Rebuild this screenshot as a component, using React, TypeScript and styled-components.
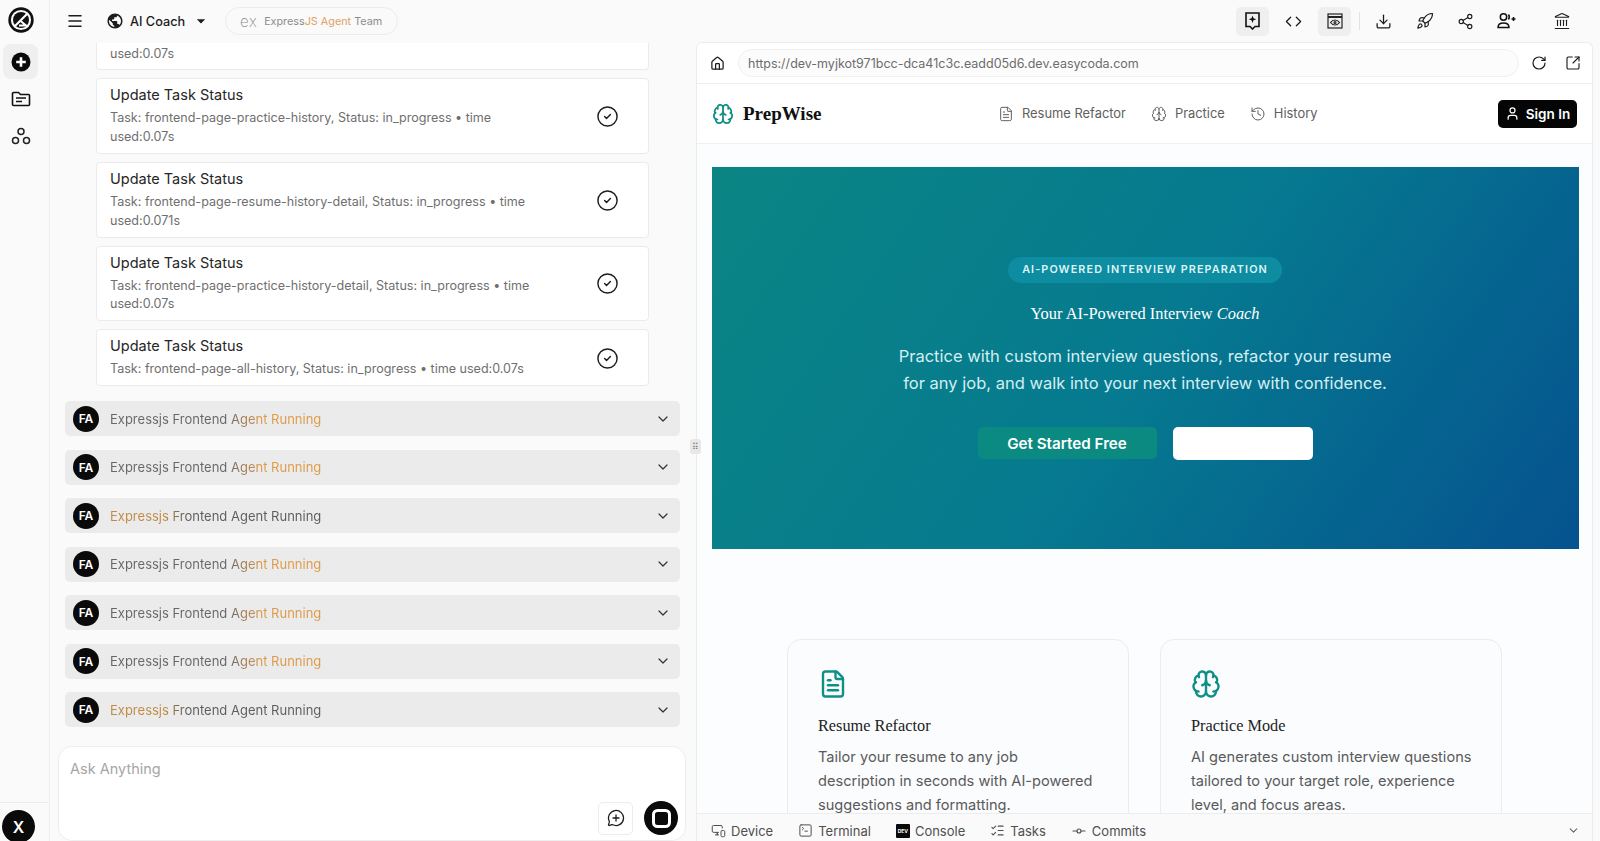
import styled, { createGlobalStyle } from "styled-components";
import {
  Brain,
  ChevronDown,
  CircleCheck,
  Code,
  Download,
  FileText,
  GitCommitHorizontal,
  History,
  House,
  Landmark,
  ListChecks,
  Menu,
  MessageCirclePlus,
  MonitorSmartphone,
  Rocket,
  RotateCw,
  Share2,
  SquareArrowOutUpRight,
  SquareTerminal,
  User,
} from "lucide-react";
import { MdPublic, MdArrowDropDown } from "react-icons/md";

const GlobalStyle = createGlobalStyle`
  * { box-sizing: border-box; }
  html, body, #root { height: 100%; }
  body {
    margin: 0;
    overflow: hidden;
    background: #fafafa;
    color: #1c1c1c;
    font-family: Inter, "Liberation Sans", sans-serif;
  }
`;

const Shell = styled.div`
  display: flex;
  height: 100vh;
`;

const Rail = styled.aside`
  width: 50px;
  flex: none;
  display: flex;
  flex-direction: column;
  align-items: flex-start;
  padding-left: 3px;
  border-right: 1px solid #efefef;
`;

const RailLogo = styled.div`
  height: 42px;
  width: 35px;
  padding-bottom: 3px;
  display: flex;
  align-items: center;
  justify-content: center;
`;

const RailButton = styled.div<{ $active?: boolean }>`
  width: 35px;
  height: 35px;
  margin-top: 2px;
  display: flex;
  align-items: center;
  justify-content: center;
  border-radius: 8px;
  background: ${(p) => (p.$active ? "#efefef" : "transparent")};
`;

const RailFoot = styled.div`
  margin-top: auto;
  margin-left: -3px;
  width: 49px;
  height: 39px;
  padding: 7px 0 0 2px;
  border-top: 1px solid #ececec;
`;

const Avatar = styled.div<{ $size: number }>`
  width: ${(p) => p.$size}px;
  height: ${(p) => p.$size}px;
  flex: none;
  display: flex;
  align-items: center;
  justify-content: center;
  border-radius: 50%;
  background: #0a0a0a;
  color: #fff;
  font-size: ${(p) => (p.$size > 30 ? 16 : 12)}px;
  font-weight: 600;
`;

const Main = styled.div`
  flex: 1;
  min-width: 0;
  display: flex;
  flex-direction: column;
`;

const TopBar = styled.header`
  height: 42px;
  flex: none;
  display: flex;
  align-items: center;
  padding-left: 16px;
`;

const Project = styled.div`
  display: flex;
  align-items: center;
  margin-left: 22px;
  font-size: 12.7px;
  font-weight: 500;
  gap: 6px;
`;

const TeamPill = styled.div`
  height: 28px;
  margin-left: 14px;
  padding: 0 15px 0 14px;
  display: flex;
  align-items: center;
  gap: 7px;
  border: 1px solid #ececec;
  border-radius: 14px;
  font-size: 10.8px;
  color: #8d8d8d;
`;

const ExMark = styled.span`
  font-size: 15px;
  font-weight: 200;
  line-height: 1;
  letter-spacing: 0.5px;
  color: #8a8a8a;
`;

const Amber = styled.span`
  color: #dfa264;
`;

const TopActions = styled.div`
  margin-left: auto;
  display: flex;
  align-items: center;
  padding-right: 22px;
`;

const ActionButton = styled.div<{ $active?: boolean; $gap?: number }>`
  width: 33px;
  height: 29px;
  margin-left: ${(p) => p.$gap ?? 8}px;
  display: flex;
  align-items: center;
  justify-content: center;
  border-radius: 5px;
  background: ${(p) => (p.$active ? "#efefef" : "transparent")};
`;

const ActionDivider = styled.div`
  width: 1px;
  height: 18px;
  margin-left: 8px;
  background: #e3e3e3;
`;

const Workspace = styled.div`
  flex: 1;
  min-height: 0;
  display: flex;
  position: relative;
`;

const ChatPane = styled.section`
  width: 646px;
  flex: none;
  display: flex;
  flex-direction: column;
`;

const ChatScroll = styled.div`
  flex: 1;
  min-height: 0;
  overflow: hidden;
  display: flex;
  flex-direction: column;
  justify-content: flex-end;
  padding: 0 16px 19px 15px;
`;

const TaskList = styled.div`
  display: flex;
  flex-direction: column;
  gap: 8px;
  padding: 0 31px;
  margin-bottom: 15px;
`;

const TaskStub = styled.div`
  height: 27px;
  flex: none;
  padding: 0 13px;
  background: #fff;
  border: 1px solid #ebebeb;
  border-top: 0;
  border-radius: 0 0 4px 4px;
  font-size: 12.5px;
  line-height: 21px;
  color: #6f6f6f;
`;

const TaskCard = styled.div`
  flex: none;
  display: flex;
  align-items: center;
  padding: 7px 29px 6px 13px;
  background: #fff;
  border: 1px solid #ebebeb;
  border-radius: 4px;
`;

const TaskBody = styled.div`
  flex: 1;
  margin-right: 46px;
`;

const TaskTitle = styled.div`
  font-size: 14.5px;
  line-height: 18px;
  margin-bottom: 5px;
  color: #262626;
`;

const TaskText = styled.div`
  font-size: 12.55px;
  line-height: 18.8px;
  color: #6f6f6f;
`;

const AgentList = styled.div`
  display: flex;
  flex-direction: column;
  gap: 13.5px;
`;

const AgentRow = styled.div`
  height: 35px;
  flex: none;
  display: flex;
  align-items: center;
  padding: 0 9px 0 8px;
  background: #ebebeb;
  border-radius: 5px;
`;

const AgentLabel = styled.span<{ $sweep: "start" | "end" }>`
  margin-left: 11px;
  margin-right: auto;
  font-size: 13px;
  background: ${(p) =>
    p.$sweep === "end"
      ? "linear-gradient(90deg, #666 56%, #dd9a45 72%)"
      : "linear-gradient(90deg, #c08a45 26%, #5c5c5c 36%)"};
  -webkit-background-clip: text;
  background-clip: text;
  color: transparent;
`;

const Composer = styled.div`
  height: 95px;
  flex: none;
  margin: 0 10px 0 8px;
  padding: 13px 7px 5px 11px;
  display: flex;
  flex-direction: column;
  background: #fff;
  border: 1px solid #eeeeee;
  border-radius: 14px;
`;

const Placeholder = styled.div`
  font-size: 14.5px;
  color: #a6a6a6;
`;

const ComposerActions = styled.div`
  margin-top: auto;
  display: flex;
  align-items: center;
  justify-content: flex-end;
  gap: 11px;
`;

const AttachButton = styled.div`
  width: 35px;
  height: 33px;
  display: flex;
  align-items: center;
  justify-content: center;
  border: 1px solid #ececec;
  border-radius: 5px;
`;

const StopButton = styled.div`
  width: 34px;
  height: 34px;
  display: flex;
  align-items: center;
  justify-content: center;
  border-radius: 50%;
  background: #0a0a0a;

  &::after {
    content: "";
    width: 13px;
    height: 13px;
    border: 3px solid #fff;
    border-radius: 5.500px;
  }
`;

const Grip = styled.div`
  position: absolute;
  left: 640px;
  top: 397px;
  width: 11px;
  height: 15px;
  display: flex;
  align-items: center;
  justify-content: center;
  background: #e8e8e8;
  border-radius: 3px;
  color: #777;
  font-size: 9px;
  line-height: 1;
  z-index: 2;
`;

const PreviewPane = styled.section`
  flex: 1;
  min-width: 0;
  margin-right: 7px;
  display: flex;
  flex-direction: column;
  background: #fff;
  border: 1px solid #ececec;
  border-bottom: 0;
  border-radius: 6px 6px 0 0;
  font-family: Inter, "Liberation Sans", sans-serif;
`;

const UrlRow = styled.div`
  height: 41px;
  flex: none;
  display: flex;
  align-items: center;
  padding: 0 11px 0 13px;
  border-bottom: 1px solid #eeeeee;
`;

const UrlField = styled.div`
  flex: 1;
  height: 28px;
  margin: 0 12px 0 13px;
  padding-left: 9px;
  display: flex;
  align-items: center;
  border: 1px solid #f0f0f0;
  border-radius: 14px;
  background: #fcfcfc;
  font-size: 12.5px;
  color: #6d6d6d;
`;

const UrlAction = styled.div<{ $gap?: number }>`
  margin-left: ${(p) => p.$gap ?? 0}px;
  display: flex;
`;

const SiteScroll = styled.div`
  flex: 1;
  min-height: 0;
  overflow: hidden;
  background: #fcfdfe;
`;

const SiteHeader = styled.div`
  height: 60px;
  display: flex;
  align-items: center;
  justify-content: space-between;
  padding: 0 15px;
  border-bottom: 1px solid #f0f0f0;
  background: #fff;
`;

const Brand = styled.div`
  display: flex;
  align-items: center;
  gap: 9px;
  font-family: "Liberation Serif", serif;
  font-size: 19px;
  font-weight: 700;
  color: #101010;
`;

const SiteNav = styled.nav`
  display: flex;
  gap: 25px;
  margin-right: 4px;
`;

const SiteNavItem = styled.div`
  display: flex;
  align-items: center;
  gap: 8px;
  font-size: 12.9px;
  color: #5f5f5f;
`;

const SignIn = styled.div`
  width: 79px;
  height: 28px;
  display: flex;
  align-items: center;
  justify-content: center;
  gap: 6px;
  background: #050505;
  border-radius: 5px;
  color: #fff;
  font-size: 13.5px;
  font-weight: 600;
`;

const Hero = styled.div`
  height: 382px;
  margin: 23px 13px 0 15px;
  padding-right: 1px;
  display: flex;
  flex-direction: column;
  align-items: center;
  justify-content: center;
  background: linear-gradient(125deg, #0a8583 0%, #067a90 50%, #05528f 100%);
  color: #fff;
`;

const Eyebrow = styled.div`
  height: 26px;
  width: 274px;
  display: flex;
  align-items: center;
  justify-content: center;
  border-radius: 13px;
  background: #0d8ca2;
  font-size: 10.8px;
  font-weight: 600;
  letter-spacing: 1.1px;
  color: #dff4f6;
`;

const HeroTitle = styled.div`
  margin-top: 21px;
  font-family: "Liberation Serif", serif;
  font-size: 16.4px;
  line-height: 20px;
`;

const HeroText = styled.p`
  margin: 19px 0 0;
  text-align: center;
  font-size: 16.5px;
  line-height: 27.5px;
  color: #d4eef2;
`;

const HeroActions = styled.div`
  margin-top: 29px;
  display: flex;
  gap: 16px;
  align-items: center;
`;

const HeroButton = styled.div<{ $light?: boolean }>`
  width: ${(p) => (p.$light ? 140 : 179)}px;
  height: ${(p) => (p.$light ? 33 : 32)}px;
  display: flex;
  align-items: center;
  justify-content: center;
  border-radius: 5px;
  background: ${(p) => (p.$light ? "#fff" : "#0a8a80")};
  font-size: 15.2px;
  font-weight: 600;
`;

const Features = styled.div`
  margin: 90px auto 0;
  width: 715px;
  display: grid;
  grid-template-columns: 342px 342px;
  gap: 31px;
`;

const FeatureCard = styled.div`
  height: 220px;
  padding: 29px 20px 29px 30px;
  border: 1px solid #ececf0;
  border-radius: 14px;
  background: #fbfcfe;
`;

const FeatureTitle = styled.div`
  margin-top: 13px;
  font-family: "Liberation Serif", serif;
  font-size: 16.3px;
  line-height: 20px;
  color: #222;
`;

const FeatureText = styled.div`
  margin-top: 9px;
  font-size: 14.6px;
  line-height: 24px;
  color: #5a5a5a;
`;

const DockBar = styled.div`
  height: 28px;
  flex: none;
  display: flex;
  align-items: center;
  padding: 6px 12px 0 14px;
  gap: 25px;
  background: #fafafa;
  border-top: 1px solid #ededed;
`;

const DockTab = styled.div`
  display: flex;
  align-items: center;
  gap: 5px;
  font-size: 13px;
  color: #4f4f4f;
`;

const DevBadge = styled.span`
  width: 14px;
  height: 14px;
  display: flex;
  align-items: center;
  justify-content: center;
  background: #0a0a0a;
  border-radius: 1px;
  color: #fff;
  font-size: 5px;
  font-weight: 700;
`;

const DockEnd = styled.div`
  margin-left: auto;
  display: flex;
`;

const LogoMark = () => (
  <svg width="26" height="26" viewBox="0 0 26 26" fill="none">
    <circle cx="13" cy="13" r="11.4" stroke="#111" strokeWidth="2.6" />
    <circle cx="13" cy="13" r="8" fill="#111" />
    <path d="M6.500 19.500 19.500 6.500" stroke="#fff" strokeWidth="2.2" />
    <path d="M12 13.500 18 18.500H11" stroke="#fff" strokeWidth="2" fill="none" />
  </svg>
);

const PlusDisc = () => (
  <svg width="20" height="20" viewBox="0 0 20 20">
    <circle cx="10" cy="10" r="9.500" fill="#0a0a0a" />
    <path d="M10 5.200v9.600M5.200 10h9.600" stroke="#fff" strokeWidth="2.600" />
  </svg>
);

const FolderIcon = () => (
  <svg width="20" height="18" viewBox="0 0 20 18" fill="none" stroke="#111" strokeWidth="1.600">
    <path d="M1.500 3.500a1 1 0 0 1 1-1h5l2 2h8a1 1 0 0 1 1 1v9a1 1 0 0 1-1 1h-15a1 1 0 0 1-1-1z" />
    <path d="M5 8h10M5 11.500h6" />
  </svg>
);

const NodesIcon = () => (
  <svg width="20" height="20" viewBox="0 0 20 20" fill="none" stroke="#222" strokeWidth="1.500">
    <circle cx="10" cy="5.500" r="3" />
    <circle cx="4.500" cy="14.500" r="3" />
    <circle cx="15.500" cy="14.500" r="3" />
  </svg>
);

const SparkNote = () => (
  <svg width="15" height="18" viewBox="0 0 15 18" fill="none" stroke="#111" strokeWidth="1.600">
    <path d="M1 1h13v13.500h-4L7.500 17 5 14.500H1z" />
    <path d="M7.500 3.500l1 2.800 2.800 1-2.800 1-1 2.800-1-2.800-2.800-1 2.800-1z" fill="#111" stroke="none" />
  </svg>
);

const EyeWindow = () => (
  <svg width="16" height="16" viewBox="0 0 16 16" fill="none" stroke="#222" strokeWidth="1.200">
    <rect x="1" y="1" width="14" height="14" />
    <path d="M1 4h14" strokeWidth="2" />
    <path d="M3.500 9.500C5 7.500 6.500 7 8 7s3 .5 4.500 2.500C11 11.500 9.500 12 8 12s-3-.5-4.500-2.500z" />
    <circle cx="8" cy="9.500" r="1" />
  </svg>
);

const InviteIcon = () => (
  <svg width="20" height="18" viewBox="0 0 20 18" fill="none" stroke="#111" strokeWidth="1.500">
    <circle cx="6.500" cy="5" r="3.200" />
    <path d="M1 15.500c0-3 2.200-4.500 5.500-4.500s5.500 1.500 5.500 4.500z" />
    <path d="M11.500 2.500c1 1.600 1 3.500 0 5" />
    <path d="M16.500 5v4M14.500 7h4" />
  </svg>
);

const tasks = [
  "Task: frontend-page-practice-history, Status: in_progress • time used:0.07s",
  "Task: frontend-page-resume-history-detail, Status: in_progress • time used:0.071s",
  "Task: frontend-page-practice-history-detail, Status: in_progress • time used:0.07s",
  "Task: frontend-page-all-history, Status: in_progress • time used:0.07s",
];

const agents: Array<"start" | "end"> = ["end", "end", "start", "end", "end", "end", "start"];

export default function App() {
  return (
    <>
      <GlobalStyle />
      <Shell>
        <Rail>
          <RailLogo>
            <LogoMark />
          </RailLogo>
          <RailButton $active>
            <PlusDisc />
          </RailButton>
          <RailButton>
            <FolderIcon />
          </RailButton>
          <RailButton>
            <NodesIcon />
          </RailButton>
          <RailFoot>
            <Avatar $size={33}>X</Avatar>
          </RailFoot>
        </Rail>

        <Main>
          <TopBar>
            <Menu size={18} strokeWidth={2} />
            <Project>
              <MdPublic size={18} />
              <span>AI Coach</span>
              <MdArrowDropDown size={20} />
            </Project>
            <TeamPill>
              <ExMark>ex</ExMark>
              <span>
                Express<Amber>JS Agent</Amber> Team
              </span>
            </TeamPill>
            <TopActions>
              <ActionButton $active>
                <SparkNote />
              </ActionButton>
              <ActionButton>
                <Code size={17} strokeWidth={1.8} />
              </ActionButton>
              <ActionButton $active>
                <EyeWindow />
              </ActionButton>
              <ActionDivider />
              <ActionButton $gap={7}>
                <Download size={17} strokeWidth={1.8} />
              </ActionButton>
              <ActionButton>
                <Rocket size={18} strokeWidth={1.6} />
              </ActionButton>
              <ActionButton>
                <Share2 size={17} strokeWidth={1.6} />
              </ActionButton>
              <ActionButton>
                <InviteIcon />
              </ActionButton>
              <ActionButton $gap={22}>
                <Landmark size={18} strokeWidth={1.5} />
              </ActionButton>
            </TopActions>
          </TopBar>

          <Workspace>
            <ChatPane>
              <ChatScroll>
                <TaskList>
                  <TaskStub>used:0.07s</TaskStub>
                  {tasks.map((text) => (
                    <TaskCard key={text}>
                      <TaskBody>
                        <TaskTitle>Update Task Status</TaskTitle>
                        <TaskText>{text}</TaskText>
                      </TaskBody>
                      <CircleCheck size={23} strokeWidth={1.5} />
                    </TaskCard>
                  ))}
                </TaskList>
                <AgentList>
                  {agents.map((sweep, i) => (
                    <AgentRow key={i}>
                      <Avatar $size={26}>FA</Avatar>
                      <AgentLabel $sweep={sweep}>Expressjs Frontend Agent Running</AgentLabel>
                      <ChevronDown size={16} strokeWidth={1.8} color="#333" />
                    </AgentRow>
                  ))}
                </AgentList>
              </ChatScroll>
              <Composer>
                <Placeholder>Ask Anything</Placeholder>
                <ComposerActions>
                  <AttachButton>
                    <MessageCirclePlus size={18} strokeWidth={1.7} />
                  </AttachButton>
                  <StopButton />
                </ComposerActions>
              </Composer>
            </ChatPane>

            <Grip>⠿</Grip>

            <PreviewPane>
              <UrlRow>
                <House size={15} strokeWidth={2} />
                <UrlField>https://dev-myjkot971bcc-dca41c3c.eadd05d6.dev.easycoda.com</UrlField>
                <UrlAction>
                  <RotateCw size={16} strokeWidth={1.8} />
                </UrlAction>
                <UrlAction $gap={18}>
                  <SquareArrowOutUpRight size={16} strokeWidth={1.7} />
                </UrlAction>
              </UrlRow>
              <SiteScroll>
                <SiteHeader>
                  <Brand>
                    <Brain size={22} strokeWidth={1.9} color="#0f8f86" />
                    PrepWise
                  </Brand>
                  <SiteNav>
                    <SiteNavItem>
                      <FileText size={16} strokeWidth={1.5} />
                      Resume Refactor
                    </SiteNavItem>
                    <SiteNavItem>
                      <Brain size={16} strokeWidth={1.5} />
                      Practice
                    </SiteNavItem>
                    <SiteNavItem>
                      <History size={16} strokeWidth={1.5} />
                      History
                    </SiteNavItem>
                  </SiteNav>
                  <SignIn>
                    <User size={15} strokeWidth={2} />
                    Sign In
                  </SignIn>
                </SiteHeader>

                <Hero>
                  <Eyebrow>AI-POWERED INTERVIEW PREPARATION</Eyebrow>
                  <HeroTitle>
                    Your AI-Powered Interview <em>Coach</em>
                  </HeroTitle>
                  <HeroText>
                    Practice with custom interview questions, refactor your resume
                    <br />
                    for any job, and walk into your next interview with confidence.
                  </HeroText>
                  <HeroActions>
                    <HeroButton>Get Started Free</HeroButton>
                    <HeroButton $light />
                  </HeroActions>
                </Hero>

                <Features>
                  <FeatureCard>
                    <FileText size={30} strokeWidth={1.9} color="#0f8f86" />
                    <FeatureTitle>Resume Refactor</FeatureTitle>
                    <FeatureText>
                      Tailor your resume to any job
                      <br />
                      description in seconds with AI-powered
                      <br />
                      suggestions and formatting.
                    </FeatureText>
                  </FeatureCard>
                  <FeatureCard>
                    <Brain size={30} strokeWidth={1.9} color="#0f8f86" />
                    <FeatureTitle>Practice Mode</FeatureTitle>
                    <FeatureText>
                      AI generates custom interview questions
                      <br />
                      tailored to your target role, experience
                      <br />
                      level, and focus areas.
                    </FeatureText>
                  </FeatureCard>
                </Features>
              </SiteScroll>

              <DockBar>
                <DockTab>
                  <MonitorSmartphone size={15} strokeWidth={1.6} />
                  Device
                </DockTab>
                <DockTab>
                  <SquareTerminal size={15} strokeWidth={1.6} />
                  Terminal
                </DockTab>
                <DockTab>
                  <DevBadge>DEV</DevBadge>
                  Console
                </DockTab>
                <DockTab>
                  <ListChecks size={15} strokeWidth={1.7} />
                  Tasks
                </DockTab>
                <DockTab>
                  <GitCommitHorizontal size={16} strokeWidth={1.7} />
                  Commits
                </DockTab>
                <DockEnd>
                  <ChevronDown size={13} color="#666" />
                </DockEnd>
              </DockBar>
            </PreviewPane>
          </Workspace>
        </Main>
      </Shell>
    </>
  );
}
